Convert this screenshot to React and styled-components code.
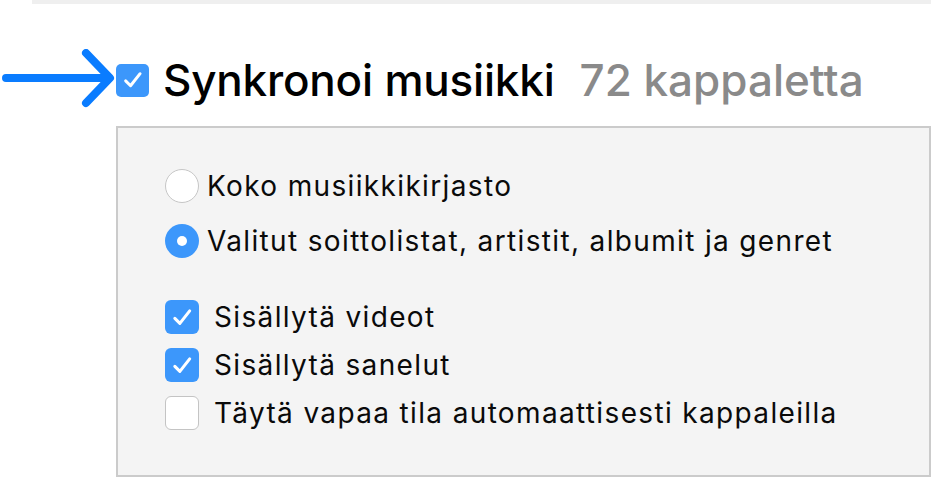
import styled, { createGlobalStyle } from "styled-components";

const GlobalStyle = createGlobalStyle`
  html, body {
    margin: 0;
    padding: 0;
    background: #ffffff;
    overflow: hidden;
  }
  body {
    font-family: Inter, "Noto Sans", "Liberation Sans", sans-serif;
    -webkit-font-smoothing: antialiased;
  }
`;

const Page = styled.div`
  width: 931px;
  height: 500px;
  display: flex;
  flex-direction: column;
`;

const TopRule = styled.div`
  height: 4px;
  margin-left: 32px;
  background: #efefef;
`;

const Header = styled.div`
  display: flex;
  align-items: center;
  height: 60px;
  margin-top: 46px;
  padding-left: 2px;
`;

const Arrow = styled.svg`
  width: 114px;
  height: 62px;
  flex: none;
`;

const Box = styled.span`
  flex: none;
  box-sizing: border-box;
  width: ${({ size }) => size}px;
  height: ${({ size }) => size}px;
  border-radius: ${({ radius }) => radius}px;
  background: ${({ checked }) => (checked ? "#3c97fb" : "#ffffff")};
  border: ${({ checked }) => (checked ? "none" : "1.5px solid #c4c4c4")};
  display: flex;
  align-items: center;
  justify-content: center;

  & svg {
    width: 78%;
    height: 78%;
  }
`;

const Radio = styled.span`
  flex: none;
  box-sizing: border-box;
  width: 34px;
  height: 34px;
  border-radius: 50%;
  background: ${({ checked }) => (checked ? "#3c97fb" : "#ffffff")};
  border: ${({ checked }) => (checked ? "none" : "1.5px solid #c6c6c6")};
  display: flex;
  align-items: center;
  justify-content: center;

  &::after {
    content: "";
    display: ${({ checked }) => (checked ? "block" : "none")};
    width: 10px;
    height: 10px;
    border-radius: 50%;
    background: #ffffff;
  }
`;

const Title = styled.h1`
  margin: 0 0 0 14px;
  font-size: 44px;
  font-weight: 500;
  color: #000000;
  letter-spacing: -0.2px;
  white-space: nowrap;
`;

const Count = styled.span`
  margin-left: 25px;
  font-size: 44px;
  font-weight: 500;
  color: #8a8a8a;
  white-space: nowrap;
`;

const Panel = styled.div`
  margin: 16px 0 0 116px;
  height: 351px;
  box-sizing: border-box;
  background: #f4f4f4;
  border: 2px solid #cbcbcb;
  padding: 41px 0 0 47px;
  display: flex;
  flex-direction: column;
`;

const Group = styled.div`
  display: flex;
  flex-direction: column;
  gap: ${({ gap }) => gap}px;
  margin-bottom: ${({ after }) => after || 0}px;
`;

const Option = styled.label`
  display: flex;
  align-items: center;
  gap: ${({ gap }) => gap}px;
  height: 34px;
  font-size: 28px;
  color: #0a0a0a;
  letter-spacing: 1.35px;
  white-space: nowrap;
`;

function Check({ checked, size = 34, radius = 6 }) {
  return (
    <Box checked={checked} size={size} radius={radius}>
      {checked && (
        <svg viewBox="0 0 20 20">
          <path
            d="M4.4 10.8 L8.2 14.6 L15.6 5.2"
            fill="none"
            stroke="#ffffff"
            strokeWidth="2.3"
            strokeLinecap="round"
            strokeLinejoin="round"
          />
        </svg>
      )}
    </Box>
  );
}

export default function App() {
  return (
    <Page>
      <GlobalStyle />
      <TopRule />
      <Header>
        <Arrow viewBox="0 0 114 62">
          <path
            d="M4 29 H104 M84 4 L108 29 L84 54"
            fill="none"
            stroke="#0a7cff"
            strokeWidth="8"
            strokeLinecap="round"
            strokeLinejoin="round"
          />
        </Arrow>
        <Check checked size={33} radius={5} />
        <Title>Synkronoi musiikki</Title>
        <Count>72 kappaletta</Count>
      </Header>
      <Panel>
        <Group gap={21} after={42}>
          <Option gap={8}>
            <Radio />
            Koko musiikkikirjasto
          </Option>
          <Option gap={8}>
            <Radio checked />
            Valitut soittolistat, artistit, albumit ja genret
          </Option>
        </Group>
        <Group gap={14}>
          <Option gap={15}>
            <Check checked />
            Sisällytä videot
          </Option>
          <Option gap={15}>
            <Check checked />
            Sisällytä sanelut
          </Option>
          <Option gap={15}>
            <Check />
            Täytä vapaa tila automaattisesti kappaleilla
          </Option>
        </Group>
      </Panel>
    </Page>
  );
}
